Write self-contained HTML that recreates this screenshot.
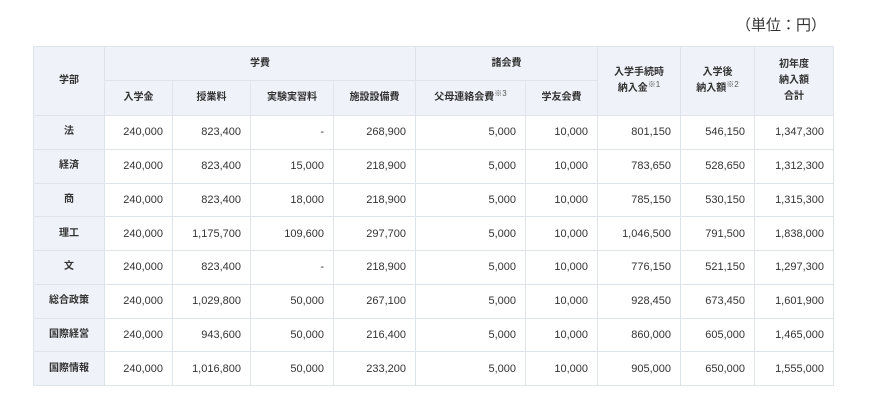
<!DOCTYPE html>
<html><head><meta charset="utf-8"><style>
body{margin:0;width:870px;height:401px;background:#fff;font-family:"Liberation Sans","Noto Sans CJK JP",sans-serif;color:#333;position:relative;overflow:hidden}
.unit{position:absolute;right:44px;top:14px;font-size:15px;color:#333}
table{position:absolute;left:33px;top:46px;border-collapse:collapse;table-layout:fixed;width:800px;font-size:10.5px}
td,th{border:1px solid #dfe4ea;padding:0 9px;box-sizing:border-box}
tr.b{height:33.75px}
th{background:#eff3f9;font-weight:bold;text-align:center;line-height:16px;font-size:10px}
td{text-align:right;font-size:11px}
sup{font-size:8px;font-weight:normal;color:#555;vertical-align:4px;line-height:0}
</style></head><body>
<div class="unit">（単位：円）</div>
<table>
<colgroup><col style="width:71px"><col style="width:68px"><col style="width:78px"><col style="width:83px"><col style="width:82px"><col style="width:110px"><col style="width:72px"><col style="width:83px"><col style="width:74px"><col style="width:79px"></colgroup>
<tr style="height:34px"><th rowspan="2">学部</th><th colspan="4">学費</th><th colspan="2">諸会費</th><th rowspan="2">入学手続時<br>納入金<sup>※1</sup></th><th rowspan="2">入学後<br>納入額<sup>※2</sup></th><th rowspan="2">初年度<br>納入額<br>合計</th></tr>
<tr style="height:35px"><th>入学金</th><th>授業料</th><th>実験実習料</th><th>施設設備費</th><th>父母連絡会費<sup>※3</sup></th><th>学友会費</th></tr>
<tr class="b"><th>法</th><td>240,000</td><td>823,400</td><td>-</td><td>268,900</td><td>5,000</td><td>10,000</td><td>801,150</td><td>546,150</td><td>1,347,300</td></tr>
<tr class="b"><th>経済</th><td>240,000</td><td>823,400</td><td>15,000</td><td>218,900</td><td>5,000</td><td>10,000</td><td>783,650</td><td>528,650</td><td>1,312,300</td></tr>
<tr class="b"><th>商</th><td>240,000</td><td>823,400</td><td>18,000</td><td>218,900</td><td>5,000</td><td>10,000</td><td>785,150</td><td>530,150</td><td>1,315,300</td></tr>
<tr class="b"><th>理工</th><td>240,000</td><td>1,175,700</td><td>109,600</td><td>297,700</td><td>5,000</td><td>10,000</td><td>1,046,500</td><td>791,500</td><td>1,838,000</td></tr>
<tr class="b"><th>文</th><td>240,000</td><td>823,400</td><td>-</td><td>218,900</td><td>5,000</td><td>10,000</td><td>776,150</td><td>521,150</td><td>1,297,300</td></tr>
<tr class="b"><th>総合政策</th><td>240,000</td><td>1,029,800</td><td>50,000</td><td>267,100</td><td>5,000</td><td>10,000</td><td>928,450</td><td>673,450</td><td>1,601,900</td></tr>
<tr class="b"><th>国際経営</th><td>240,000</td><td>943,600</td><td>50,000</td><td>216,400</td><td>5,000</td><td>10,000</td><td>860,000</td><td>605,000</td><td>1,465,000</td></tr>
<tr class="b"><th>国際情報</th><td>240,000</td><td>1,016,800</td><td>50,000</td><td>233,200</td><td>5,000</td><td>10,000</td><td>905,000</td><td>650,000</td><td>1,555,000</td></tr>
</table>
</body></html>
